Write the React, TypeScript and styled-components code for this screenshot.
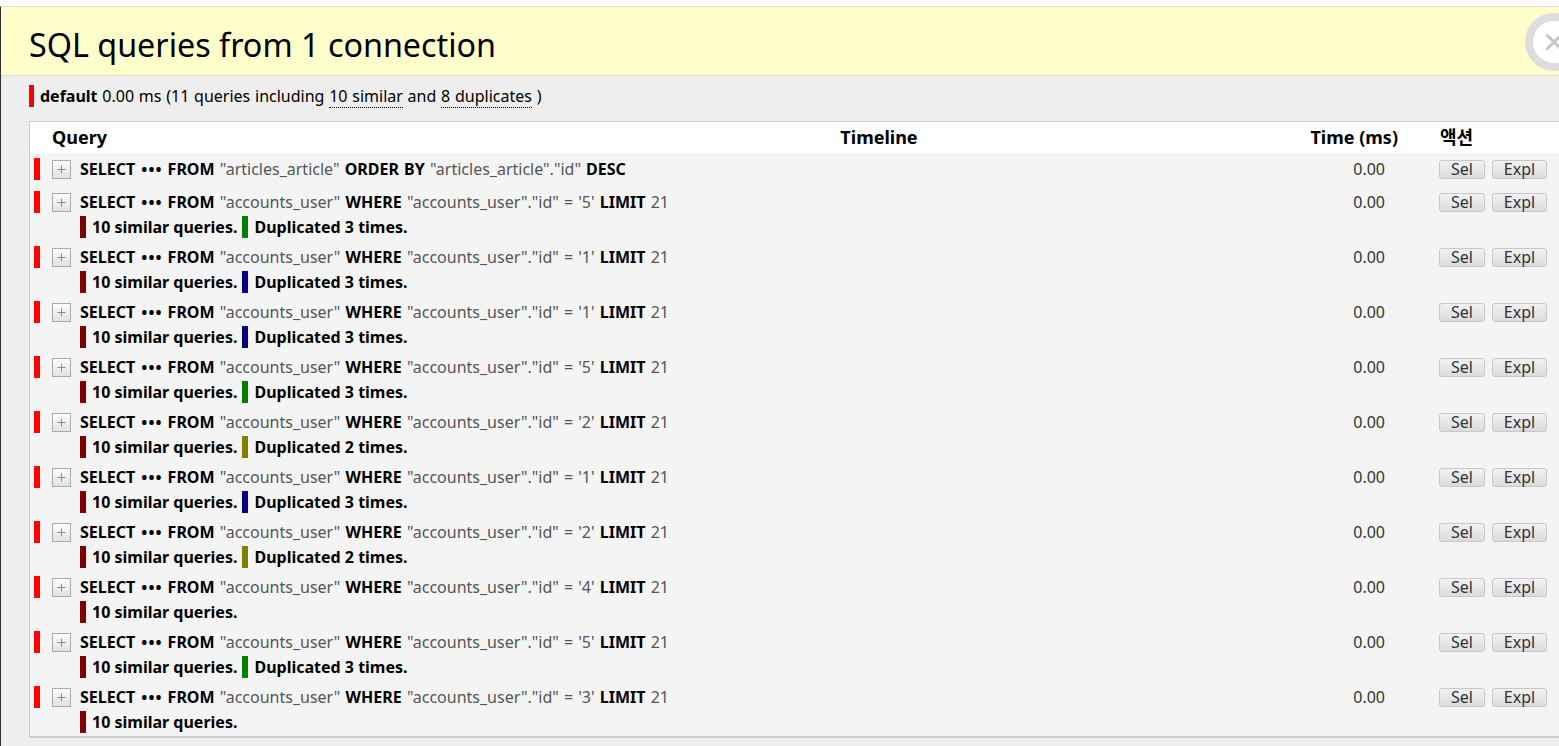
import React from "react";
import styled, { createGlobalStyle } from "styled-components";

const Global = createGlobalStyle`
  html, body { margin: 0; padding: 0; background: #fff; overflow: hidden; }
  body { font-family: "Noto Sans", "Noto Sans CJK KR", sans-serif; color: #000; }
  * { box-sizing: border-box; }
`;

const Page = styled.div`
  width: 1590px;
  height: 100vh;
  display: flex;
  flex-direction: column;
`;

const TopGap = styled.div`
  height: 6px;
  background: #fff;
  flex: none;
`;

const Panel = styled.div`
  flex: 1;
  display: flex;
  flex-direction: column;
  border-top: 1px solid #ddd;
  border-left: 1px solid #333;
`;

const Header = styled.div`
  height: 69px;
  flex: none;
  background: #ffc;
  border-bottom: 1px solid #ddd;
  display: flex;
  align-items: flex-start;
  padding: 0 7px 0 28px;
`;

const Title = styled.h3`
  margin: 0;
  padding-top: 3px;
  font-weight: 400;
  font-size: 32.3px;
  line-height: 68px;
  color: #000;
`;

const Close = styled.div`
  margin-left: auto;
  margin-top: 6px;
  width: 58px;
  height: 58px;
  border-radius: 50%;
  border: 8px solid #ddd;
  background: #fff;
  display: flex;
  align-items: center;
  justify-content: center;
  flex: none;
`;

const Content = styled.div`
  flex: 1;
  background: #eee;
  padding: 9px 0 0 28px;
`;

const Summary = styled.div`
  display: flex;
  align-items: center;
  height: 22px;
  font-size: 16px;
  line-height: 22px;
  margin-bottom: 14px;
  word-spacing: 0.6px;
`;

const ColorBar = styled.span<{ $color: string; $w?: number }>`
  display: inline-block;
  width: ${(p) => p.$w ?? 6}px;
  height: 22px;
  background: ${(p) => p.$color};
  flex: none;
  vertical-align: top;
`;

const SummaryText = styled.span`
  margin-left: 6px;
  white-space: pre;
`;

const Abbr = styled.abbr`
  text-decoration: none;
  border-bottom: 1px dotted #000;
  cursor: help;
`;

const Table = styled.div`
  border: 1px solid #ccc;
  border-bottom: 2px solid #ccc;
  border-right: none;
`;

const cols = "15px 30px 625px 358px 372px 1fr";

const HeadRow = styled.div`
  display: grid;
  grid-template-columns: ${cols};
  height: 31px;
  background: #fff;
  font-weight: 700;
  font-size: 18px;
  line-height: 31px;
`;

const Th = styled.div<{ $align?: string; $pl?: number; $pr?: number; $span?: number }>`
  text-align: ${(p) => p.$align ?? "left"};
  padding-left: ${(p) => p.$pl ?? 0}px;
  padding-right: ${(p) => p.$pr ?? 0}px;
  grid-column: ${(p) => (p.$span ? `span ${p.$span}` : "auto")};
  white-space: nowrap;
`;

const Row = styled.div<{ $single?: boolean }>`
  display: grid;
  grid-template-columns: ${cols};
  background: #f4f4f4;
  padding: 5px 0 3px;
  min-height: ${(p) => (p.$single ? 33 : 55)}px;
  font-size: 16px;
  line-height: 22px;
  align-items: start;
`;

const BarCell = styled.div`
  padding-left: 4px;
  display: flex;
`;

const ToggleCell = styled.div`
  padding-left: 7px;
  padding-top: 2px;
`;

const Toggle = styled.button`
  width: 19px;
  height: 19px;
  padding: 0;
  margin: 0;
  border: 1px solid #aaa;
  background: linear-gradient(#fdfdfd, #e2e2e2);
  display: flex;
  align-items: center;
  justify-content: center;
  cursor: pointer;
`;

const QueryCell = styled.div`
  padding-left: 5px;
  white-space: nowrap;
  color: #000;
`;

const MainLine = styled.div`
  word-spacing: 1px;
`;

const Kw = styled.strong`
  font-weight: 700;
  color: #000;
`;

const Dots = styled.strong`
  font-weight: 700;
  letter-spacing: 1px;
  margin-left: 1px;
`;

const Str = styled.span`
  color: #555;
`;

const SubLine = styled.div`
  display: flex;
  align-items: center;
  margin-top: 3px;
  font-weight: 700;
  height: 22px;
`;

const SubText = styled.span`
  margin: 0 5px 0 6px;
`;

const TimeCell = styled.div`
  text-align: right;
  padding-right: 45px;
  color: #333;
`;

const ActionCell = styled.div`
  padding-left: 9px;
  display: flex;
  gap: 7px;
  padding-top: 1.5px;
`;

const ActionButton = styled.button<{ $w: number }>`
  width: ${(p) => p.$w}px;
  height: 19px;
  padding: 0;
  border: 1px solid #c8c8c8;
  border-radius: 3px;
  background: linear-gradient(#f2f2f2, #dcdcdc);
  font-family: inherit;
  font-size: 16px;
  line-height: 17px;
  color: #333;
  cursor: pointer;
`;

const PlusIcon = () => (
  <svg width="9" height="9" viewBox="0 0 9 9">
    <path d="M4.5 0.5v8M0.5 4.5h8" stroke="#8a8a8a" strokeWidth="1" />
  </svg>
);

const CloseIcon = () => (
  <svg width="18" height="18" viewBox="0 0 18 18">
    <path d="M2.5 2.5L15.5 15.5M15.5 2.5L2.5 15.5" stroke="#c4c4c4" strokeWidth="3" strokeLinecap="round" />
  </svg>
);

type Q = {
  table: string;
  tail: React.ReactNode;
  similar: boolean;
  dup?: { n: number; color: string };
};

const userTail = (id: string) => (
  <>
    <Kw>WHERE</Kw> <Str>"accounts_user"."id" = '{id}'</Str> <Kw>LIMIT</Kw> <Str>21</Str>
  </>
);

const GREEN = "#008000";
const NAVY = "#000080";
const OLIVE = "#808000";

const queries: Q[] = [
  {
    table: "articles_article",
    tail: (
      <>
        <Kw>ORDER BY</Kw> <Str>"articles_article"."id"</Str> <Kw>DESC</Kw>
      </>
    ),
    similar: false,
  },
  { table: "accounts_user", tail: userTail("5"), similar: true, dup: { n: 3, color: GREEN } },
  { table: "accounts_user", tail: userTail("1"), similar: true, dup: { n: 3, color: NAVY } },
  { table: "accounts_user", tail: userTail("1"), similar: true, dup: { n: 3, color: NAVY } },
  { table: "accounts_user", tail: userTail("5"), similar: true, dup: { n: 3, color: GREEN } },
  { table: "accounts_user", tail: userTail("2"), similar: true, dup: { n: 2, color: OLIVE } },
  { table: "accounts_user", tail: userTail("1"), similar: true, dup: { n: 3, color: NAVY } },
  { table: "accounts_user", tail: userTail("2"), similar: true, dup: { n: 2, color: OLIVE } },
  { table: "accounts_user", tail: userTail("4"), similar: true },
  { table: "accounts_user", tail: userTail("5"), similar: true, dup: { n: 3, color: GREEN } },
  { table: "accounts_user", tail: userTail("3"), similar: true },
];

export default function App() {
  return (
    <>
      <Global />
      <Page>
        <TopGap />
        <Panel>
          <Header>
            <Title>SQL queries from 1 connection</Title>
            <Close>
              <CloseIcon />
            </Close>
          </Header>
          <Content>
            <Summary>
              <ColorBar $color="#f00" $w={5} />
              <SummaryText>
                <Kw>default</Kw> 0.00 ms (11 queries including <Abbr title="Similar queries">10 similar</Abbr> and{" "}
                <Abbr title="Duplicate queries">8 duplicates</Abbr> )
              </SummaryText>
            </Summary>
            <Table>
              <HeadRow>
                <div />
                <Th $span={2} $pl={7}>Query</Th>
                <Th $align="center">Timeline</Th>
                <Th $align="right" $pr={32}>Time (ms)</Th>
                <Th $pl={10}>액션</Th>
              </HeadRow>
              {queries.map((q, i) => (
                <Row key={i} $single={!q.similar}>
                  <BarCell>
                    <ColorBar $color="#f00" />
                  </BarCell>
                  <ToggleCell>
                    <Toggle aria-label="Expand">
                      <PlusIcon />
                    </Toggle>
                  </ToggleCell>
                  <QueryCell>
                    <MainLine>
                      <Kw>SELECT</Kw> <Dots>•••</Dots> <Kw>FROM</Kw> <Str>"{q.table}"</Str> {q.tail}
                    </MainLine>
                    {q.similar && (
                      <SubLine>
                        <ColorBar $color="#800000" />
                        <SubText>10 similar queries.</SubText>
                        {q.dup && (
                          <>
                            <ColorBar $color={q.dup.color} />
                            <SubText>Duplicated {q.dup.n} times.</SubText>
                          </>
                        )}
                      </SubLine>
                    )}
                  </QueryCell>
                  <div />
                  <TimeCell>0.00</TimeCell>
                  <ActionCell>
                    <ActionButton $w={46}>Sel</ActionButton>
                    <ActionButton $w={55}>Expl</ActionButton>
                  </ActionCell>
                </Row>
              ))}
            </Table>
          </Content>
        </Panel>
      </Page>
    </>
  );
}
